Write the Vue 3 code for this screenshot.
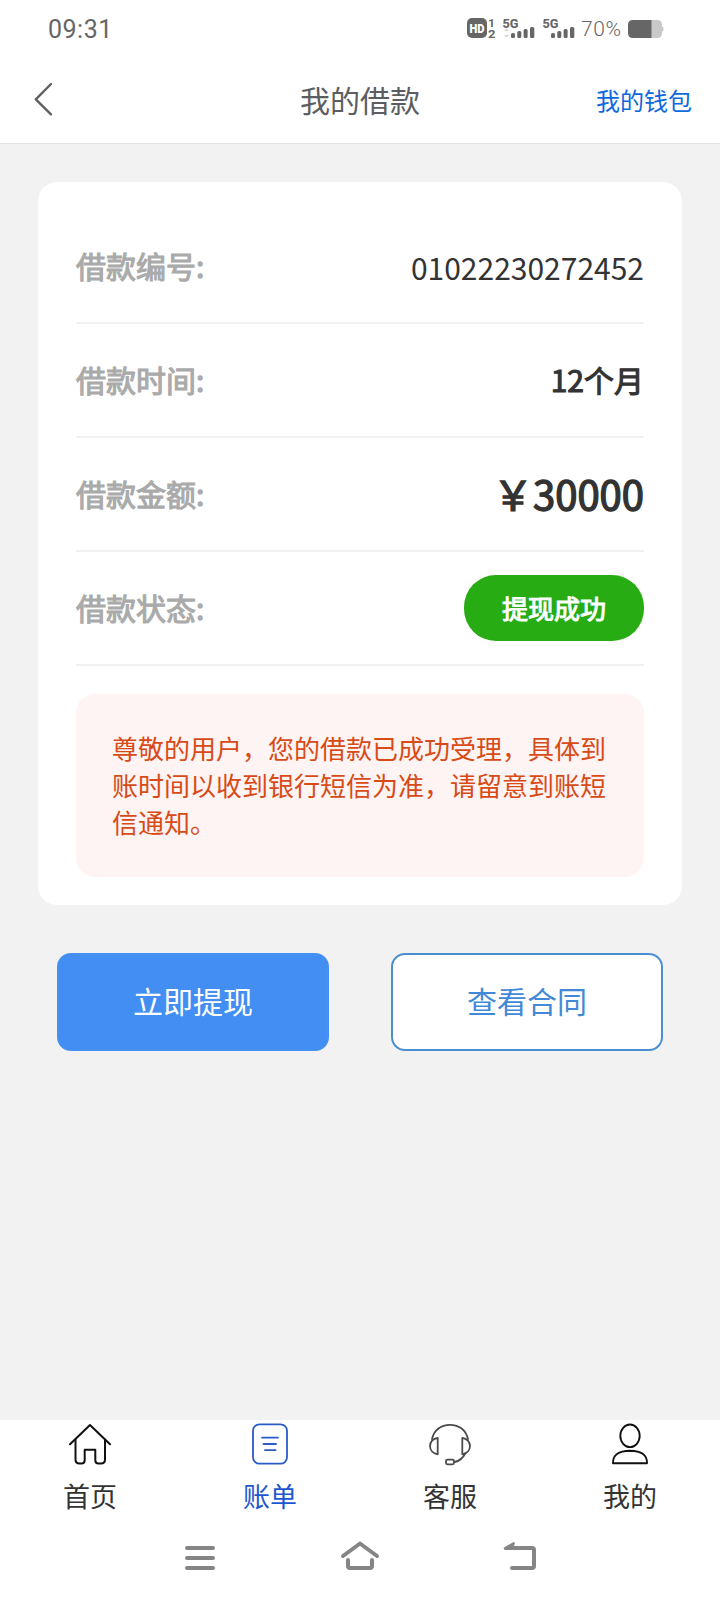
<script setup>
const rows = [
  { label: '借款编号:', value: '01022230272452', kind: 'plain' },
  { label: '借款时间:', value: '12个月', kind: 'strong' },
  { label: '借款金额:', value: '￥30000', kind: 'amount' },
  { label: '借款状态:', value: '提现成功', kind: 'badge' },
]
const tabs = [
  { name: 'home', label: '首页' },
  { name: 'bill', label: '账单', active: true },
  { name: 'service', label: '客服' },
  { name: 'mine', label: '我的' },
]
</script>

<template>
  <div class="page">
    <div class="status">
      <span class="time">09:31</span>
      <svg class="indicators" width="112" height="24" viewBox="0 0 112 24" fill="#666">
        <rect x="0" y="2" width="20" height="20" rx="5" />
        <text x="10" y="16.5" class="hd" text-anchor="middle" textLength="15" lengthAdjust="spacingAndGlyphs">HD</text>
        <text x="21" y="10.5" class="tiny" textLength="7" lengthAdjust="spacingAndGlyphs">1</text>
        <text x="21" y="21.5" class="tiny" textLength="7.5" lengthAdjust="spacingAndGlyphs">2</text>
        <text x="35.5" y="11.5" class="five" textLength="16" lengthAdjust="spacingAndGlyphs">5G</text>
        <path d="M37 15l2.5-2.5 2.5 2.5zM37 19l2.5 2.5 2.5-2.5z" fill="#d2d2d2" />
        <rect x="44" y="17" width="4" height="5" rx="1.5" />
        <rect x="50.3" y="15" width="4" height="7" rx="1.5" />
        <rect x="56.6" y="13" width="4" height="9" rx="1.5" />
        <rect x="63" y="11" width="4.3" height="11" rx="1.5" />
        <text x="75.5" y="11.5" class="five" textLength="16" lengthAdjust="spacingAndGlyphs">5G</text>
        <rect x="84" y="17" width="4" height="5" rx="1.5" />
        <rect x="90.3" y="15" width="4" height="7" rx="1.5" />
        <rect x="96.6" y="13" width="4" height="9" rx="1.5" />
        <rect x="103" y="11" width="4.3" height="11" rx="1.5" />
      </svg>
      <span class="percent">70%</span>
      <svg class="battery" width="36" height="18" viewBox="0 0 36 18">
        <path d="M23 0h6q5 0 5 5v1.5q1.500.3 1.500 1.500v2q0 1.200-1.500 1.500V13q0 5-5 5h-6z" fill="#c9c9c9" />
        <path d="M5 0h18.500v18H5q-5 0-5-5V5q0-5 5-5z" fill="#666" />
      </svg>
    </div>

    <header class="header">
      <svg class="back" width="20" height="34" viewBox="0 0 20 34" fill="none" stroke="#5f6063" stroke-width="2.400" stroke-linecap="round" stroke-linejoin="round">
        <path d="M17 2L1.800 17.300 17 32.300" />
      </svg>
      <h1>我的借款</h1>
      <a class="wallet">我的钱包</a>
    </header>

    <main>
      <section class="card">
        <div v-for="row in rows" :key="row.label" class="row">
          <span class="label">{{ row.label }}</span>
          <span :class="row.kind">{{ row.value }}</span>
        </div>
        <p class="notice">尊敬的用户，您的借款已成功受理，具体到账时间以收到银行短信为准，请留意到账短信通知。</p>
      </section>
      <div class="actions">
        <button class="primary">立即提现</button>
        <button class="outline">查看合同</button>
      </div>
    </main>

    <nav class="tabs">
      <div v-for="tab in tabs" :key="tab.name" class="tab" :class="{ active: tab.active }">
        <svg width="44" height="44" viewBox="0 0 44 44" fill="none" stroke-linecap="round" stroke-linejoin="round">
          <g v-if="tab.name === 'home'" stroke="#111" stroke-width="2">
            <path d="M2 22.300L22 3l20 19.300" />
            <path d="M7.500 17.500V37.500q0 4 4 4h2q3.200 0 3.200-3.500V27.800h10.600V38q0 3.500 3.200 3.500h2.500q4 0 4-4V17.500" />
          </g>
          <g v-else-if="tab.name === 'bill'" stroke="#2b5bc7" stroke-width="1.800">
            <rect x="5" y="2.300" width="34" height="39.400" rx="6.500" />
            <path d="M14 15.700h16M15.500 22h12.500M17 28.200h10.500" />
          </g>
          <g v-else-if="tab.name === 'service'" stroke="#4a4a4a" stroke-width="1.800">
            <path d="M4 17C6 8 13 2.800 22 2.800S38 8 40 17" />
            <path d="M9.700 15.800v16.500C5 31.500 2 28 2 24s3-7.500 7.700-8.200zM34.300 15.800v16.500C39 31.500 42 28 42 24s-3-7.500-7.700-8.200z" />
            <path d="M37.500 31C35 36 31.500 39.200 26.500 40" />
            <rect x="18" y="37.700" width="8" height="4.600" rx="1.500" />
          </g>
          <g v-else stroke="#111" stroke-width="1.900">
            <ellipse cx="22" cy="13.800" rx="9.700" ry="11.300" />
            <path d="M5 41.200q-.5-12.300 17-12.500 17.500.2 17 12.500z" />
          </g>
        </svg>
        <span>{{ tab.label }}</span>
      </div>
    </nav>

    <div class="system">
      <svg width="40" height="36" viewBox="0 0 40 36" fill="none" stroke="#858585" stroke-width="4" stroke-linecap="round">
        <path d="M7 9h26M7 19h26M7 29h26" />
      </svg>
      <svg width="40" height="36" viewBox="0 0 40 36" fill="none" stroke="#858585" stroke-width="4" stroke-linecap="round" stroke-linejoin="round">
        <path d="M3 17L20 4.500 37 17M8 21v6q0 2 2 2h20q2 0 2-2v-6" />
      </svg>
      <svg width="40" height="36" viewBox="0 0 40 36" fill="none" stroke="#858585" stroke-width="4" stroke-linecap="round" stroke-linejoin="round">
        <path d="M12 29H32q2 0 2-2V11q0-2-2-2H8" />
        <path d="M4 8.500l9.500-5.500q2.300.3 1 2.500l-1.500 3v2.500H5q-2-1-1-2.500z" fill="#858585" stroke="none" />
      </svg>
    </div>
  </div>
</template>

<style>
body {
  background: #f2f2f2;
}
</style>

<style scoped>
.page {
  display: flex;
  flex-direction: column;
  width: 720px;
  height: 1600px;
  box-sizing: border-box;
  background: #f2f2f2;
  font-family: "Noto Sans CJK SC", sans-serif;
  color: #333;
}
.status {
  display: flex;
  align-items: center;
  height: 58px;
  padding: 0 56px 0 48px;
  background: #fff;
  color: #666;
  font-family: Roboto, sans-serif;
}
.time {
  margin-right: auto;
  font-size: 25px;
  letter-spacing: 0.5px;
}
.indicators {
  margin-top: -2px;
}
.hd {
  fill: #fff;
  font-size: 12px;
  font-weight: 900;
}
.tiny {
  font-size: 11.5px;
  font-weight: 700;
}
.five {
  font-size: 13px;
  font-weight: 800;
}
.percent {
  width: 41px;
  margin: -1px 6px 0 2px;
  font-size: 21px;
  font-weight: 300;
  letter-spacing: 0.6px;
}
.header {
  display: grid;
  grid-template-columns: 1fr auto 1fr;
  align-items: center;
  height: 86px;
  padding: 0 28px 0 34px;
  box-sizing: border-box;
  border-bottom: 1px solid #e4e4e4;
  background: #fff;
}
.back {
  margin-top: -3px;
}
h1 {
  margin: -3px 0 0 -6px;
  font-size: 30px;
  font-weight: 400;
  line-height: 44px;
  color: #5c5d60;
}
.wallet {
  justify-self: end;
  margin-top: -3px;
  font-size: 24px;
  color: #0d68dc;
}
main {
  flex: 1;
  padding: 38px 38px 0;
}
.card {
  height: 723px;
  box-sizing: border-box;
  padding: 28px 38px;
  border-radius: 19px;
  background: #fff;
}
.row {
  display: flex;
  align-items: center;
  justify-content: space-between;
  height: 114px;
  box-sizing: border-box;
  border-bottom: 2px solid #f2f2f2;
  font-size: 30px;
}
.label {
  margin-top: -2px;
  color: #aaa;
  -webkit-text-stroke: 1.1px #aaa;
}
.plain {
  margin-top: 1px;
}
.strong {
  margin-top: -2px;
  -webkit-text-stroke: 1.1px #333;
}
.amount {
  margin-top: -2px;
  font-size: 40px;
  -webkit-text-stroke: 1.4px #333;
}
.badge {
  width: 180px;
  height: 66px;
  border-radius: 32px;
  background: #28ac14;
  color: #fff;
  font-size: 26px;
  line-height: 65px;
  text-align: center;
  -webkit-text-stroke: 1px #fff;
}
.notice {
  height: 183px;
  box-sizing: border-box;
  margin: 28px 0 0;
  padding: 35px 36px;
  border-radius: 19px;
  background: #fef4f3;
  color: #d84a16;
  font-size: 26px;
  line-height: 37px;
}
.actions {
  display: flex;
  justify-content: space-between;
  padding: 48px 19px 0;
}
button {
  width: 272px;
  height: 98px;
  padding: 0 0 4px;
  border: 2px solid #4490f3;
  border-radius: 14px;
  font: 400 30px "Noto Sans CJK SC", sans-serif;
}
.primary {
  background: #428ef3;
  color: #fff;
}
.outline {
  border-color: #4a8fd2;
  background: #fff;
  color: #4288d8;
}
.tabs {
  display: grid;
  grid-template-columns: repeat(4, 1fr);
  height: 100px;
  background: #fff;
}
.tab {
  display: flex;
  flex-direction: column;
  align-items: center;
  padding-top: 2px;
  font-size: 27px;
  line-height: 40px;
}
.tab span {
  margin-top: 10px;
}
.active {
  color: #1d57cf;
}
.system {
  display: flex;
  justify-content: center;
  gap: 120px;
  height: 80px;
  padding-top: 19px;
  box-sizing: border-box;
  background: #fff;
}
</style>
